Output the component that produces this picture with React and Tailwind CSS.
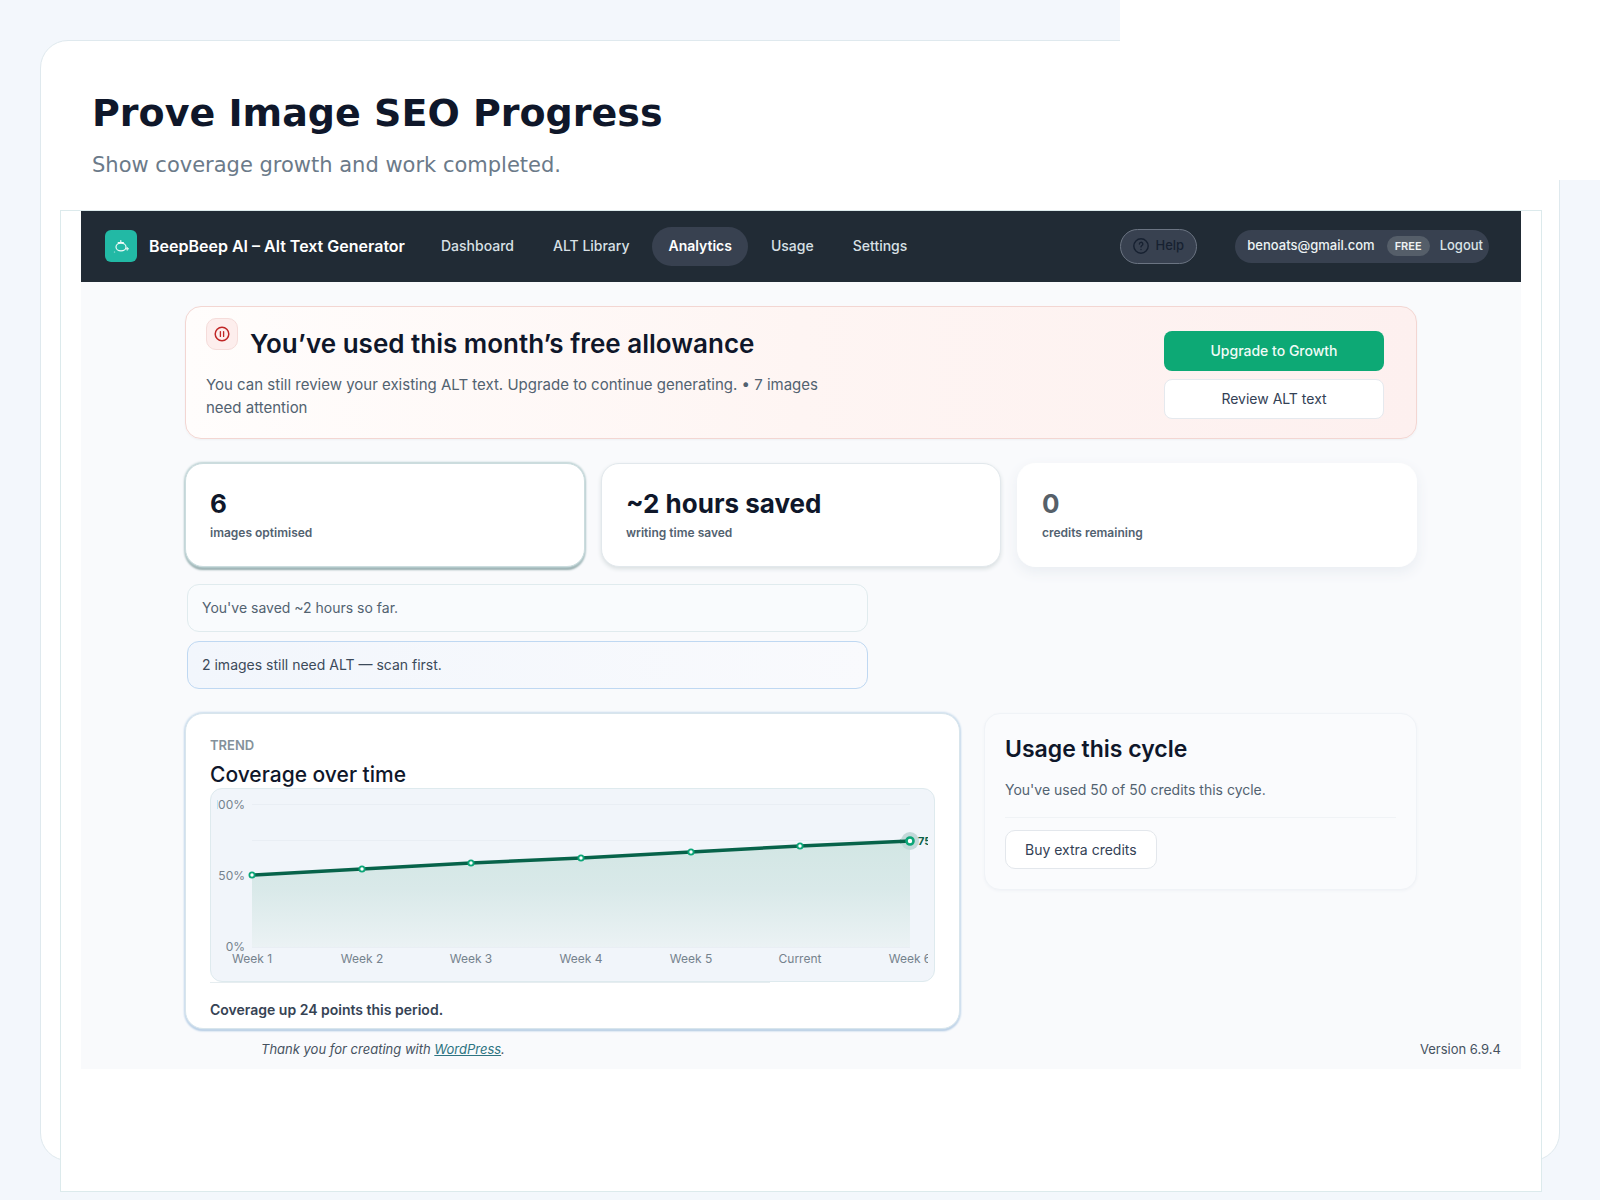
const NAV = ["Dashboard", "ALT Library", "Analytics", "Usage", "Settings"];

const STATS = [
  {
    value: "6",
    label: "images optimised",
    card: "border-[#cbdcde] shadow-[0_0_2px_1px_#bcd1d3,0_3px_2px_0_#93aaab]",
    tone: "text-[#0f172a]",
  },
  {
    value: "~2 hours saved",
    label: "writing time saved",
    card: "border-[#e2e8ec] shadow-[0_2px_4px_0_#d9dfe1]",
    tone: "text-[#0f172a]",
  },
  {
    value: "0",
    label: "credits remaining",
    card: "border-white shadow-[0_5px_14px_0_#e9edf2]",
    tone: "text-[#566069]",
  },
];

const POINTS = [
  { label: "Week 1", x: 35, y: 80 },
  { label: "Week 2", x: 145, y: 74 },
  { label: "Week 3", x: 254, y: 68 },
  { label: "Week 4", x: 364, y: 63 },
  { label: "Week 5", x: 474, y: 57 },
  { label: "Current", x: 583, y: 51 },
  { label: "Week 6", x: 693, y: 46 },
];

const LINE = POINTS.map((p) => `${p.x},${p.y}`).join(" ");

function LogoIcon() {
  return (
    <svg viewBox="0 0 16 16" className="size-4" fill="none" stroke="#f0fbf9" strokeWidth="1.2" strokeLinecap="round" aria-hidden="true">
      <ellipse cx="8" cy="9" rx="5" ry="3.8" />
      <path d="M5.2 4.6h5.2M7.8 2.6v2" />
      <path d="M14.2 9.4v2.8M12.8 10.8h2.8" strokeWidth="1" />
      <path d="M1.4 14h.2" strokeOpacity=".7" />
    </svg>
  );
}

function PauseIcon() {
  return (
    <svg viewBox="0 0 16 16" className="size-4" fill="none" stroke="#c02626" strokeWidth="1.5" strokeLinecap="round" aria-hidden="true">
      <circle cx="8" cy="8" r="6.8" />
      <path d="M6.4 5.6v4.8M9.6 5.6v4.8" strokeWidth="1.3" />
    </svg>
  );
}

function HelpIcon() {
  return (
    <svg viewBox="0 0 16 16" className="size-4" fill="none" stroke="currentColor" strokeWidth="1.4" strokeLinecap="round" strokeLinejoin="round" aria-hidden="true">
      <circle cx="8" cy="8" r="7.2" />
      <path d="M6.4 6a1.7 1.7 0 1 1 2.5 1.5c-.6.4-.9.7-.9 1.4" />
      <path d="M8 11.4v.1" />
    </svg>
  );
}

function TopBar() {
  return (
    <header className="flex h-[71px] items-center bg-[#212b35] pr-8 pb-px pl-6">
      <span className="flex size-8 items-center justify-center rounded-md bg-[#22b9a5]">
        <LogoIcon />
      </span>
      <span className="ml-3 text-base font-semibold whitespace-nowrap text-white">BeepBeep AI – Alt Text Generator</span>
      <nav className="ml-5 flex gap-[7px]">
        {NAV.map((item) => (
          <a
            key={item}
            href="#"
            className={
              item === "Analytics"
                ? "flex h-[39px] items-center rounded-full bg-[#384150] px-4 text-sm font-semibold text-white"
                : "flex h-[39px] items-center px-4 text-sm font-medium whitespace-nowrap text-[#d8e0e5]"
            }
          >
            {item}
          </a>
        ))}
      </nav>
      <button
        type="button"
        className="ml-auto flex h-[35px] w-[77px] items-center justify-center gap-1.5 rounded-full border border-[#6b7482] bg-[#384150] text-[13px] font-medium text-[#172131]"
      >
        <HelpIcon />
        Help
      </button>
      <div className="ml-[38px] flex h-[33px] items-center rounded-full bg-[#384150] pr-1.5 pl-3 text-[13px] font-medium text-[#edf3f4]">
        benoats@gmail.com
        <span className="ml-3 flex h-5 w-[43px] items-center justify-center rounded-full bg-[#555e69] text-[11px] font-semibold text-[#eef2f4]">FREE</span>
        <button type="button" className="ml-2.5 text-[#dbe4e8]">
          Logout
        </button>
      </div>
    </header>
  );
}

function AllowanceBanner() {
  return (
    <section className="flex min-h-[133px] justify-between rounded-2xl border border-[#f3d6d2] bg-linear-to-r from-[#fffdfc] via-[#fef5f3] to-[#fdf0ef] pt-[11px] pr-8 pl-5 shadow-[0_1px_2px_0_#eef0f3]">
      <div>
        <div className="flex gap-3">
          <span className="flex size-8 items-center justify-center rounded-[10px] border border-[#f5dcda] bg-[#fdeeed]">
            <PauseIcon />
          </span>
          <h2 className="mt-1.5 text-[26px] leading-10 font-semibold text-[#0f172a]">You’ve used this month’s free allowance</h2>
        </div>
        <p className="mt-[9px] max-w-[620px] text-[15px] leading-[23px] text-[#526270]">
          You can still review your existing ALT text. Upgrade to continue generating. • 7 images need attention
        </p>
      </div>
      <div className="mt-[13px] flex w-[220px] flex-col gap-2">
        <button type="button" className="h-10 rounded-lg bg-[#0da975] text-sm font-medium text-[#f1fbf7]">
          Upgrade to Growth
        </button>
        <button type="button" className="h-10 rounded-lg border border-[#e5e9ee] bg-white text-sm text-[#334155]">
          Review ALT text
        </button>
      </div>
    </section>
  );
}

function CoverageChart() {
  return (
    <div className="rounded-xl border border-[#deeaee] bg-[#f1f5fa] p-1.5">
      <svg viewBox="0 0 711 180" className="block w-full overflow-hidden font-['Inter',sans-serif]" role="img" aria-label="Coverage over time">
        <defs>
          <linearGradient id="coverage" x1="0" y1="0" x2="0" y2="1">
            <stop offset="0" stopColor="#d2e6e4" />
            <stop offset="0.45" stopColor="#d9e9e9" />
            <stop offset="1" stopColor="#ebf2f4" />
          </linearGradient>
        </defs>
        <g stroke="#e9eef4">
          <path d="M35 9.5h658M35 45.5h658M35 80.5h658M35 116.5h658M35 152.5h658" />
        </g>
        <polygon points={`35,152 ${LINE} 693,152`} fill="url(#coverage)" />
        <g fontSize="12" fill="#75828d" textAnchor="end">
          <text x="28" y="14">100%</text>
          <text x="28" y="85">50%</text>
          <text x="28" y="156">0%</text>
        </g>
        <g fontSize="12" fill="#75828d" textAnchor="middle">
          {POINTS.map((p) => (
            <text key={p.label} x={p.x} y="168">
              {p.label}
            </text>
          ))}
        </g>
        <polyline points={LINE} fill="none" stroke="#07634a" strokeWidth="3.5" strokeLinejoin="round" />
        <circle cx="693" cy="46" r="9" fill="#c3d9d9" />
        <path d="M683 46.5l10-.5" stroke="#07634a" strokeWidth="3.5" />
        {POINTS.map((p, i) => (
          <circle key={p.label} cx={p.x} cy={p.y} r={i === POINTS.length - 1 ? 3.5 : 2.6} fill="#fff" stroke="#0ca678" strokeWidth={i === POINTS.length - 1 ? 2.6 : 1.8} />
        ))}
        <text x="701" y="50" fontSize="11" fontWeight="700" fill="#0b6148">
          75%
        </text>
      </svg>
    </div>
  );
}

export default function App() {
  return (
    <div className="relative min-h-screen bg-[#f3f7fc] p-10 font-['Inter',sans-serif]">
      <div className="rounded-[28px] border border-[#dfe9ee] bg-white pr-[17px] pl-[19px]">
        <div className="px-8 pt-[46px] font-['DejaVu_Sans',sans-serif]">
          <h1 className="text-[38px] leading-[52px] font-bold text-[#0f172a]">Prove Image SEO Progress</h1>
          <p className="mt-2.5 text-[21px] leading-8 text-[#6b7a89]">Show coverage growth and work completed.</p>
        </div>

        <div className="-mb-8 mt-[29px] border border-[#dceaec] bg-white px-5 pb-[122px]">
          <div className="bg-[#f9fafc]">
            <TopBar />
            <main className="mx-auto max-w-[1232px] pt-6">
              <AllowanceBanner />

              <section className="mt-6 grid grid-cols-3 gap-4">
                {STATS.map((s) => (
                  <div key={s.label} className={`h-[104px] rounded-[18px] border bg-white px-6 pt-[22px] ${s.card}`}>
                    <div className={`text-[26px] leading-9 font-bold ${s.tone}`}>{s.value}</div>
                    <div className="mt-[3px] text-[12px] leading-4 font-semibold text-[#526270]">{s.label}</div>
                  </div>
                ))}
              </section>

              <section className="mt-[17px] ml-0.5 flex max-w-[681px] flex-col gap-[9px] text-sm leading-5">
                <p className="rounded-xl border border-[#e0ebee] bg-[#f9fbfd] px-3.5 py-[13px] text-[#526270]">You've saved ~2 hours so far.</p>
                <p className="rounded-xl border border-[#bfd8f2] bg-linear-to-r from-[#f2f6fc] to-[#f9fafd] px-3.5 py-[13px] text-[#3c4a5a]">
                  2 images still need ALT — scan first.
                </p>
              </section>

              <div className="mt-6 grid grid-cols-[minmax(0,1fr)_433px] items-start gap-6">
                <section className="rounded-[18px] border border-[#d8e5ec] bg-white px-6 pt-[23px] shadow-[0_0_2px_1px_#cadced,0_2px_2px_0_#a9c3df]">
                  <p className="text-[13px] leading-4 font-semibold text-[#84919b]">TREND</p>
                  <h2 className="mt-2 text-[21px] leading-[27px] font-medium text-[#0f172a]">Coverage over time</h2>
                  <CoverageChart />
                  <div className="mr-[165px] h-px bg-[#e6edf0]" />
                  <p className="pt-[17px] pb-2 text-sm leading-5 font-semibold text-[#364354]">Coverage up 24 points this period.</p>
                </section>

                <section className="rounded-2xl border border-[#f0f3f7] bg-[#fafbfd] px-5 pt-[17px] pb-5 shadow-[0_1px_3px_0_#f0f2f6]">
                  <h2 className="text-[23px] leading-9 font-semibold text-[#0f172a]">Usage this cycle</h2>
                  <p className="mt-[13px] text-sm leading-5 text-[#526270]">You've used 50 of 50 credits this cycle.</p>
                  <hr className="mt-[17px] border-[#f0f3f6]" />
                  <button type="button" className="mt-3 h-[39px] rounded-[10px] border border-[#e3e7ec] bg-white px-[19px] text-sm text-[#334155]">
                    Buy extra credits
                  </button>
                </section>
              </div>
            </main>

            <footer className="flex justify-between pt-2.5 pr-5 pb-2.5 pl-[180px] text-[13px] leading-5 text-[#46525f]">
              <p className="italic">
                Thank you for creating with{" "}
                <a href="#" className="text-[#2e7482] underline">
                  WordPress
                </a>
                .
              </p>
              <p>Version 6.9.4</p>
            </footer>
          </div>
        </div>
      </div>
      <div className="absolute top-0 right-0 h-[180px] w-[30%] bg-white" />
    </div>
  );
}
